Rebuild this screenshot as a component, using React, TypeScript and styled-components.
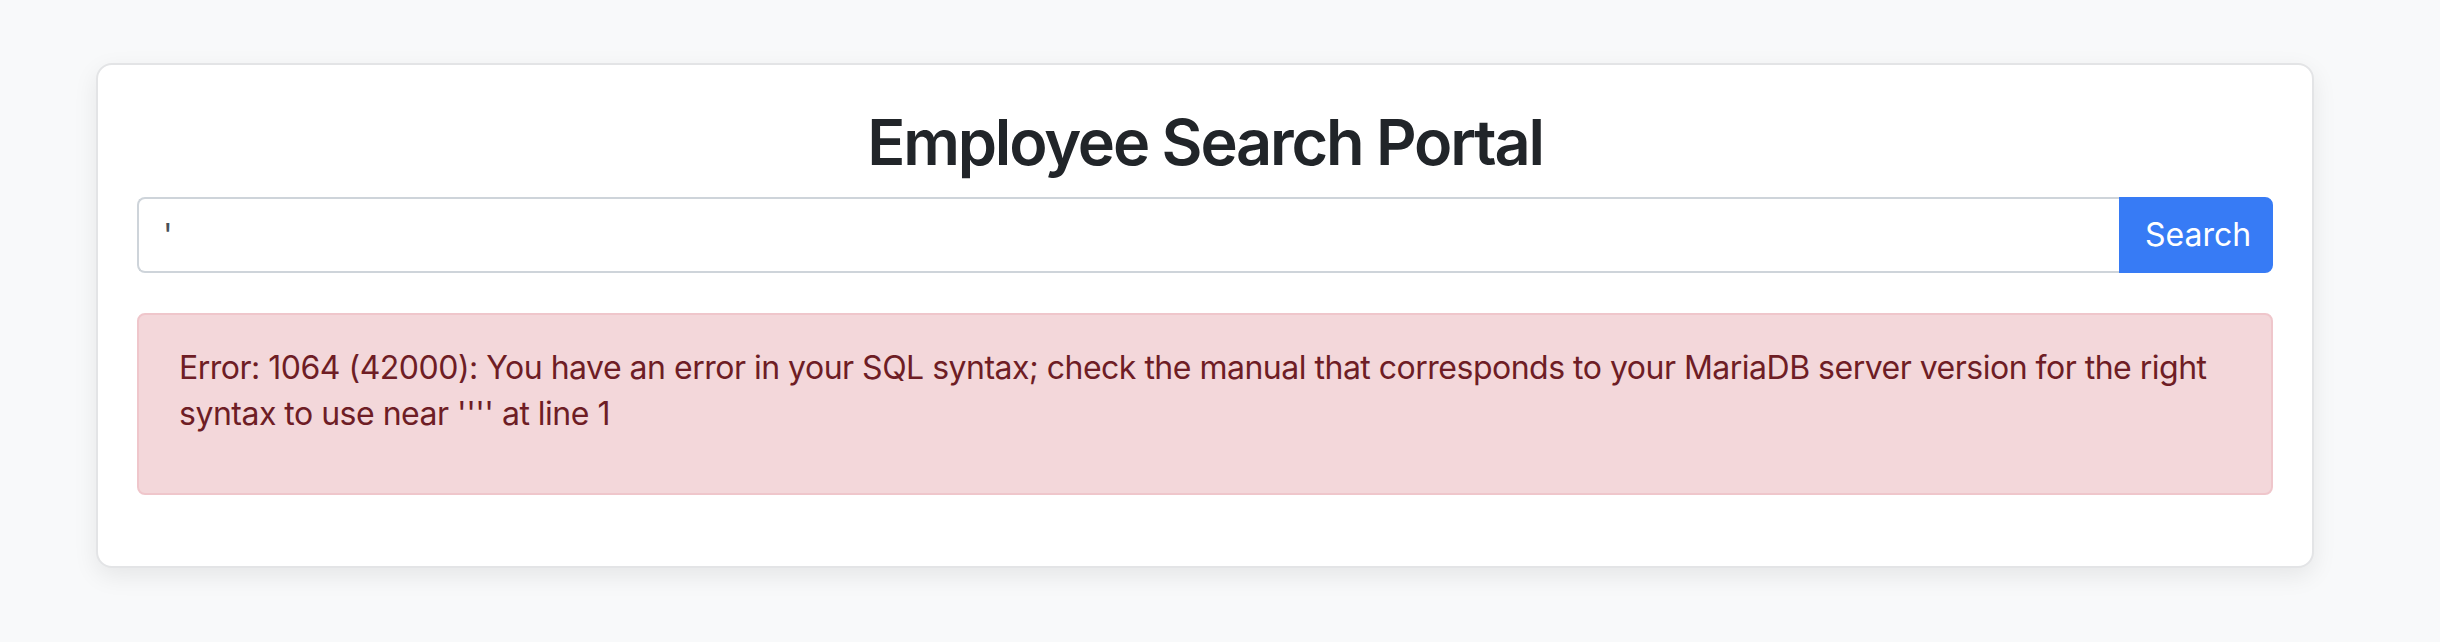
import React, { useState } from 'react';
import styled, { createGlobalStyle } from 'styled-components';

const GlobalStyle = createGlobalStyle`
  html, body {
    margin: 0;
    padding: 0;
    background-color: #f8f9fa;
  }
  body {
    font-family: Inter, "Noto Sans", "Liberation Sans", sans-serif;
    color: #212529;
  }
  * {
    box-sizing: border-box;
  }
`;

const Page = styled.div`
  min-height: 642px;
  padding: 63px 126px 0 96px;
`;

const Card = styled.div`
  background-color: #fff;
  border: 2px solid #e3e4e6;
  border-radius: 16px;
  box-shadow: 0 8px 24px rgba(0, 0, 0, 0.08);
  padding: 39px 39px;
`;

const Title = styled.h2`
  margin: 0 0 16px;
  font-size: 63px;
  font-weight: 600;
  line-height: 77px;
  text-align: center;
  letter-spacing: -2.2px;
  color: #212529;
`;

const SearchForm = styled.form`
  display: flex;
  align-items: stretch;
  margin: 0 0 40px;
`;

const SearchInput = styled.input`
  flex: 1;
  min-width: 0;
  height: 76px;
  padding: 12px 24px;
  font-family: inherit;
  font-size: 32px;
  line-height: 1.5;
  color: #495057;
  background-color: #fff;
  border: 2px solid #ced4da;
  border-right: none;
  border-radius: 8px 0 0 8px;
  outline: none;
`;

const SearchButton = styled.button`
  width: 154px;
  height: 76px;
  padding: 12px 24px;
  font-family: inherit;
  font-size: 32px;
  line-height: 1.5;
  color: #fff;
  background-color: #377bf5;
  border: 2px solid #377bf5;
  border-radius: 0 8px 8px 0;
  cursor: pointer;
`;

const Alert = styled.div`
  background-color: #f3d7da;
  border: 2px solid #efc6cb;
  border-radius: 8px;
  padding: 30px 40px 24px;
  color: #6e1d25;
  margin-bottom: 32px;
`;

const AlertText = styled.p`
  margin: 0 0 32px;
  font-size: 32px;
  line-height: 46px;
  letter-spacing: -0.5px;
`;

export default function App() {
  const [query, setQuery] = useState("'");
  const error =
    "Error: 1064 (42000): You have an error in your SQL syntax; check the manual that corresponds to your MariaDB server version for the right syntax to use near '''' at line 1";

  return (
    <>
      <GlobalStyle />
      <Page>
        <Card>
          <Title>Employee Search Portal</Title>
          <SearchForm onSubmit={(e) => e.preventDefault()}>
            <SearchInput value={query} onChange={(e) => setQuery(e.target.value)} />
            <SearchButton type="submit">Search</SearchButton>
          </SearchForm>
          <Alert>
            <AlertText>{error}</AlertText>
          </Alert>
        </Card>
      </Page>
    </>
  );
}
